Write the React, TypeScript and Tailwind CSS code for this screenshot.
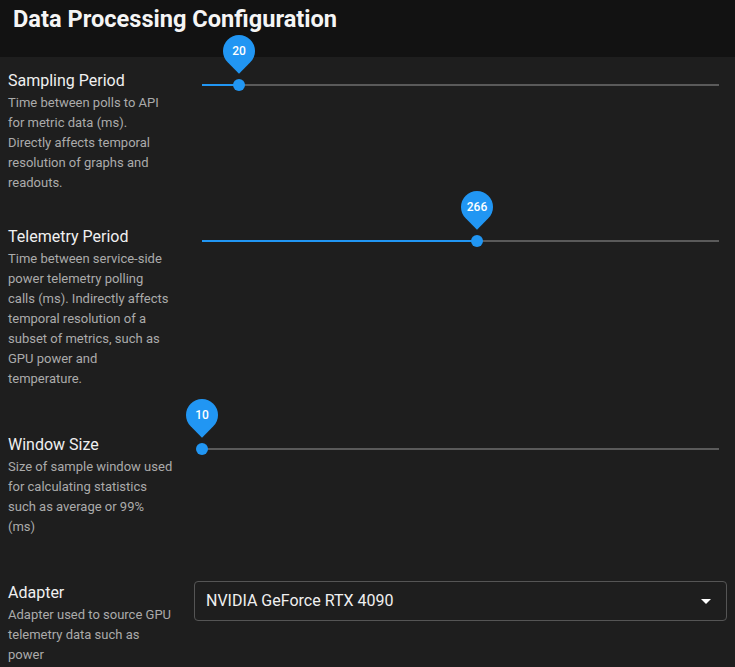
import React from "react";

type SliderProps = { value: number; pct: number };

function ValueSlider({ value, pct }: SliderProps) {
  return (
    <div className="px-2 pt-[15px]">
      <div className="relative h-[2px] w-full bg-[#5a5a5a]">
        <div className="absolute left-0 top-0 h-[2px] bg-[#2196f3]" style={{ width: `${pct}%` }} />
        <div
          className="absolute top-1/2 h-3 w-3 -translate-x-1/2 -translate-y-1/2 rounded-full bg-[#2196f3]"
          style={{ left: `${pct}%` }}
        >
          <div className="absolute left-1/2 top-[-44px] flex h-8 w-8 -translate-x-1/2 items-center justify-center">
            <div className="absolute inset-0 -rotate-45 rounded-[50%_50%_50%_0] bg-[#2196f3]" />
            <span className="relative text-[12px] font-medium text-white">{value}</span>
          </div>
        </div>
      </div>
    </div>
  );
}

function Row({
  title,
  desc,
  className,
  children,
}: {
  title: string;
  desc: string;
  className?: string;
  children: React.ReactNode;
}) {
  return (
    <div className={`flex gap-[21px] pl-2 pr-2 ${className ?? ""}`}>
      <div className="w-[165px] shrink-0">
        <div className="text-[16px] leading-[24px] text-[#f0f0f0]">{title}</div>
        <div className="text-[13px] leading-[20px] text-[#ababab]">{desc}</div>
      </div>
      <div className="min-w-0 flex-1">{children}</div>
    </div>
  );
}

export default function App() {
  return (
    <div className="h-[667px] overflow-hidden bg-[#1e1e1e] font-['Roboto',sans-serif]">
      <div className="h-[57px] bg-[#121212] pl-[13px]">
        <h1 className="text-[23.6px] font-bold leading-[38px] text-[#f5f5f5]">Data Processing Configuration</h1>
      </div>
      <div className="pt-[12px]">
        <Row
          title="Sampling Period"
          desc="Time between polls to API for metric data (ms). Directly affects temporal resolution of graphs and readouts."
          className="mb-[32px]"
        >
          <ValueSlider value={20} pct={7.16} />
        </Row>
        <Row
          title="Telemetry Period"
          desc="Time between service-side power telemetry polling calls (ms). Indirectly affects temporal resolution of a subset of metrics, such as GPU power and temperature."
          className="mb-[44px]"
        >
          <ValueSlider value={266} pct={53.2} />
        </Row>
        <Row
          title="Window Size"
          desc="Size of sample window used for calculating statistics such as average or 99% (ms)"
          className="mb-[44px]"
        >
          <ValueSlider value={10} pct={0} />
        </Row>
        <Row title="Adapter" desc="Adapter used to source GPU telemetry data such as power">
          <div className="flex h-10 items-center justify-between rounded border border-[#555] pl-[11px] pr-[14px]">
            <span className="text-[16px] text-[#f0f0f0]">NVIDIA GeForce RTX 4090</span>
            <svg width="24" height="24" viewBox="0 0 24 24" className="-mr-[6px]">
              <path d="M7 10l5 5 5-5z" fill="#ffffff" />
            </svg>
          </div>
        </Row>
      </div>
    </div>
  );
}
